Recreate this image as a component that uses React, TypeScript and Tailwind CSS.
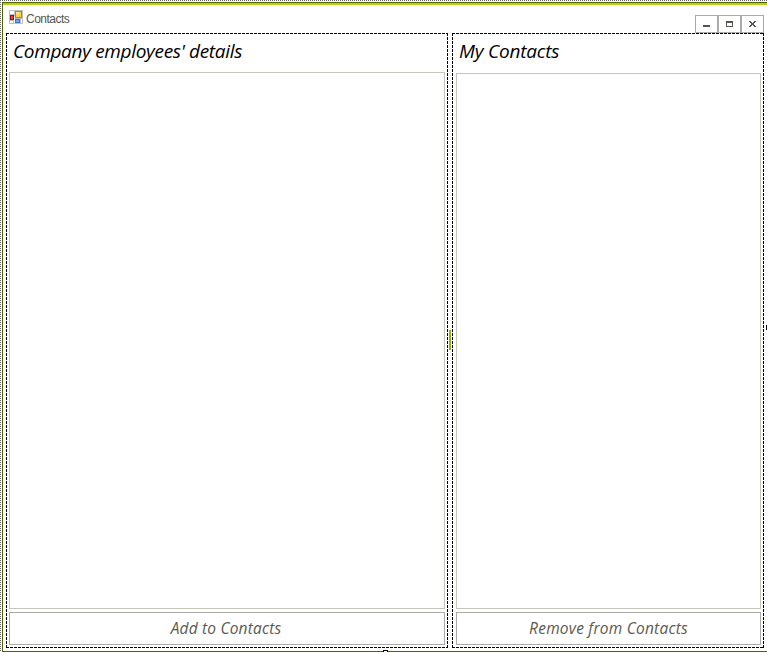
import type { ReactNode } from "react";

function AppIcon() {
  return (
    <svg width="14" height="14" viewBox="0 0 14 14" shapeRendering="crispEdges">
      <rect width="14" height="14" fill="#c0c0c0" />
      <rect x="1" y="1" width="4" height="3" fill="#fff" />
      <rect x="1" y="11" width="3" height="2" fill="#fff" />
      <rect x="12" y="9" width="1" height="4" fill="#fff" />
      <rect x="5" y="6" width="1" height="7" fill="#fff" />
      <rect x="1" y="5" width="4" height="5" fill="#941414" />
      <rect x="2" y="6" width="2" height="3" fill="#e04a42" />
      <rect x="6" y="1" width="7" height="7" fill="#b88414" />
      <rect x="7" y="2" width="5" height="5" fill="#ffcf4a" />
      <rect x="7" y="2" width="3" height="2" fill="#ffe9a0" />
      <rect x="6" y="9" width="5" height="4" fill="#3a6fd0" />
      <rect x="7" y="10" width="3" height="2" fill="#78a8f4" />
    </svg>
  );
}

function CaptionButton({ label, children }: { label: string; children: ReactNode }) {
  return (
    <button aria-label={label} className="flex h-[18px] w-[23px] items-center justify-center border border-[#ababab] bg-white">
      <svg width="7" height="6" viewBox="0 0 7 6" fill="#55564f" shapeRendering="crispEdges">
        {children}
      </svg>
    </button>
  );
}

function Panel({ title, action, className, bodyClass, listClass, actionClass }: { title: string; action: string; className: string; bodyClass: string; listClass: string; actionClass: string }) {
  return (
    <section
      className={
        "flex h-[615px] flex-col bg-no-repeat bg-[image:repeating-linear-gradient(90deg,#000_0_3px,transparent_3px_4px),repeating-linear-gradient(90deg,#000_0_3px,transparent_3px_4px),repeating-linear-gradient(180deg,#000_0_3px,transparent_3px_4px),repeating-linear-gradient(180deg,#000_0_3px,transparent_3px_4px)] [background-size:100%_1px,100%_1px,1px_100%,1px_100%] [background-position:0_0,0_100%,0_0,100%_0] " +
        className
      }
    >
      <div className={"flex h-full flex-col pb-[3px] pr-[3px] " + bodyClass}>
        <h2 className={"shrink-0 whitespace-nowrap pt-[5px] text-[19px] leading-[26px] italic text-black " + listClass}>{title}</h2>
        <div className="min-h-0 flex-1 border border-[#c5c5b9] bg-white" />
        <button className={"mt-[3px] flex h-[33px] shrink-0 items-center justify-center border border-[#ababab] bg-white text-[15.5px] italic text-[#5a5a52] " + actionClass}>
          {action}
        </button>
      </div>
    </section>
  );
}

export default function App() {
  return (
    <div className="relative h-[652px] w-[767px] overflow-hidden bg-white bg-no-repeat pl-[2px] pt-[2px] font-['Open_Sans','Noto_Sans',sans-serif] bg-[image:repeating-linear-gradient(90deg,#666_0_1px,#fff_1px_2px),repeating-linear-gradient(180deg,#666_0_1px,#fff_1px_2px)] [background-size:100%_1px,1px_100%]">
      <div className="flex h-[650px] w-[765px] flex-col border-b border-l border-t border-[#526108] bg-white">
        <div className="h-[2px] shrink-0 bg-[#b5d210]" />
        <header className="flex h-[28px] shrink-0 justify-between pl-[6px] pr-[3px]">
          <div className="flex gap-[3px] pt-[5px]">
            <AppIcon />
            <span className="pt-px font-['Liberation_Sans',Arial,sans-serif] text-[12px] leading-4 tracking-[-0.5px] text-[#55564f]">Contacts</span>
          </div>
          <div className="flex pt-[10px]">
            <CaptionButton label="Minimize"><rect y="4" width="7" height="2" /></CaptionButton>
            <CaptionButton label="Maximize"><path d="M0 0h7v6H0zM1 2v3h5V2z" fillRule="evenodd" /></CaptionButton>
            <CaptionButton label="Close"><path d="M0 0h2v1h1v1h1V1h1V0h2v1H6v1H5v2h1v1h1v1H5V5H4V4H3v1H2v1H0V5h1V4h1V2H1V1H0z" /></CaptionButton>
          </div>
        </header>
        <main className="flex pl-[3px]">
          <Panel title="Company employees' details" action="Add to Contacts" className="w-[442px]" bodyClass="pl-[3px]" listClass="h-[39px] pl-[4px] tracking-[-0.32px]" actionClass="tracking-[0.18px] pr-[2px]" />
          <div className="flex w-[4px] items-center justify-center">
            <div className="mb-[1px] h-[20px] w-[2px] bg-[#94b800]" />
          </div>
          <Panel title="My Contacts" action="Remove from Contacts" className="w-[312px]" bodyClass="pl-[4px]" listClass="h-[40px] pl-[3px] tracking-[-0.2px]" actionClass="tracking-[0.22px]" />
        </main>
      </div>
      <div className="absolute left-[766px] top-[325px] h-[5px] w-[4px] border border-black bg-black" />
      <div className="absolute left-[383px] top-[650px] h-[5px] w-[5px] border border-black bg-white" />
    </div>
  );
}
